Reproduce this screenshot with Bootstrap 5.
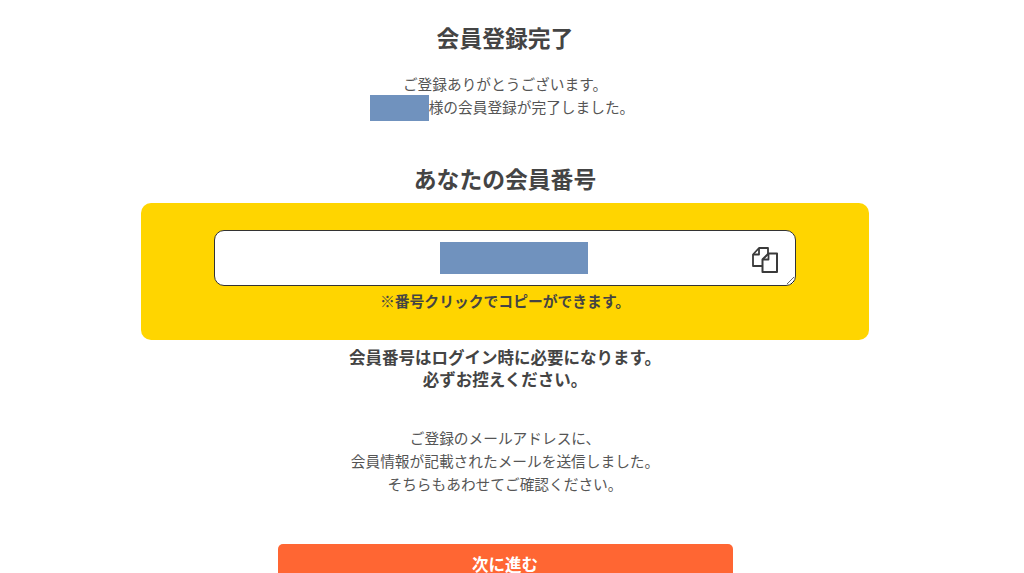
<!DOCTYPE html>
<html lang="ja">
<head>
<meta charset="utf-8">
<title>会員登録完了</title>
<link href="https://cdn.jsdelivr.net/npm/bootstrap@5.3.0/dist/css/bootstrap.min.css" rel="stylesheet">
<style>
html,body{height:573px;overflow:hidden}
body{font-family:"Noto Sans CJK JP","Liberation Sans",sans-serif;color:#555;font-size:14.7px;line-height:23px;background:#fff}
.page-wrap{width:728px;margin-left:141px;padding-top:22px;text-align:center}
.page-title{font-size:22.8px;font-weight:700;line-height:32px;margin:0;color:#444}
.lead-text{margin:18px 0 0;line-height:23px}
.name-line{display:inline-block;padding-right:6px}
.masked{display:inline-block;background:#7092be}
.masked-name{width:59px;height:26px;vertical-align:middle;margin-top:-3px}
.sub-title{margin-top:42px;margin-bottom:8px}
.yellow-box{background:#ffd500;border-radius:10px;height:137px;padding:27px 73px 0}
.field-wrap{position:relative;height:56px}
.num-field{display:block;width:100%;height:56px;border:1px solid #333;border-radius:10px;background:#fff;padding:0;outline:0}
.masked-num{position:absolute;left:226px;top:12px;width:148px;height:32px}
.copy-icon{position:absolute;left:537px;top:16px;width:27px;height:27px}
.copy-note{font-size:14.8px;font-weight:700;line-height:20px;margin:5px 0 0;color:#444}
.must-note{font-size:16.5px;font-weight:700;line-height:22px;margin:6px 0 0;color:#444}
.mail-note{margin:36px 0 0}
.next-btn{display:block;width:455px;height:40px;margin:49px auto 0;background:#f63;border:0;border-radius:5px;color:#fff;font-size:16.5px;font-weight:700;line-height:40px;padding:0}
</style>
</head>
<body>
<main class="page-wrap">
  <h1 class="page-title">会員登録完了</h1>
  <p class="lead-text">ご登録ありがとうございます。<br><span class="name-line"><span class="masked masked-name"></span>様の会員登録が完了しました。</span></p>
  <h2 class="page-title sub-title">あなたの会員番号</h2>
  <section class="yellow-box">
    <div class="field-wrap">
      <textarea class="num-field" aria-label="会員番号"></textarea>
      <span class="masked masked-num"></span>
      <svg class="copy-icon" viewBox="0 0 27 27" fill="none" stroke="#3a3a3a" stroke-width="1.8" stroke-linejoin="round">
        <path d="M11 20H2V8.5L8 2H17V8"/>
        <path d="M8 2V8.5H2"/>
        <path d="M11.5 13.5L17.5 7.5H26V26H11.5Z" fill="#fff" stroke-width="2"/>
        <path d="M17.5 7.5V13.5H11.5"/>
      </svg>
    </div>
    <p class="copy-note">※番号クリックでコピーができます。</p>
  </section>
  <p class="must-note">会員番号はログイン時に必要になります。<br>必ずお控えください。</p>
  <p class="mail-note">ご登録のメールアドレスに、<br>会員情報が記載されたメールを送信しました。<br>そちらもあわせてご確認ください。</p>
  <button type="button" class="btn next-btn">次に進む</button>
</main>
</body>
</html>
